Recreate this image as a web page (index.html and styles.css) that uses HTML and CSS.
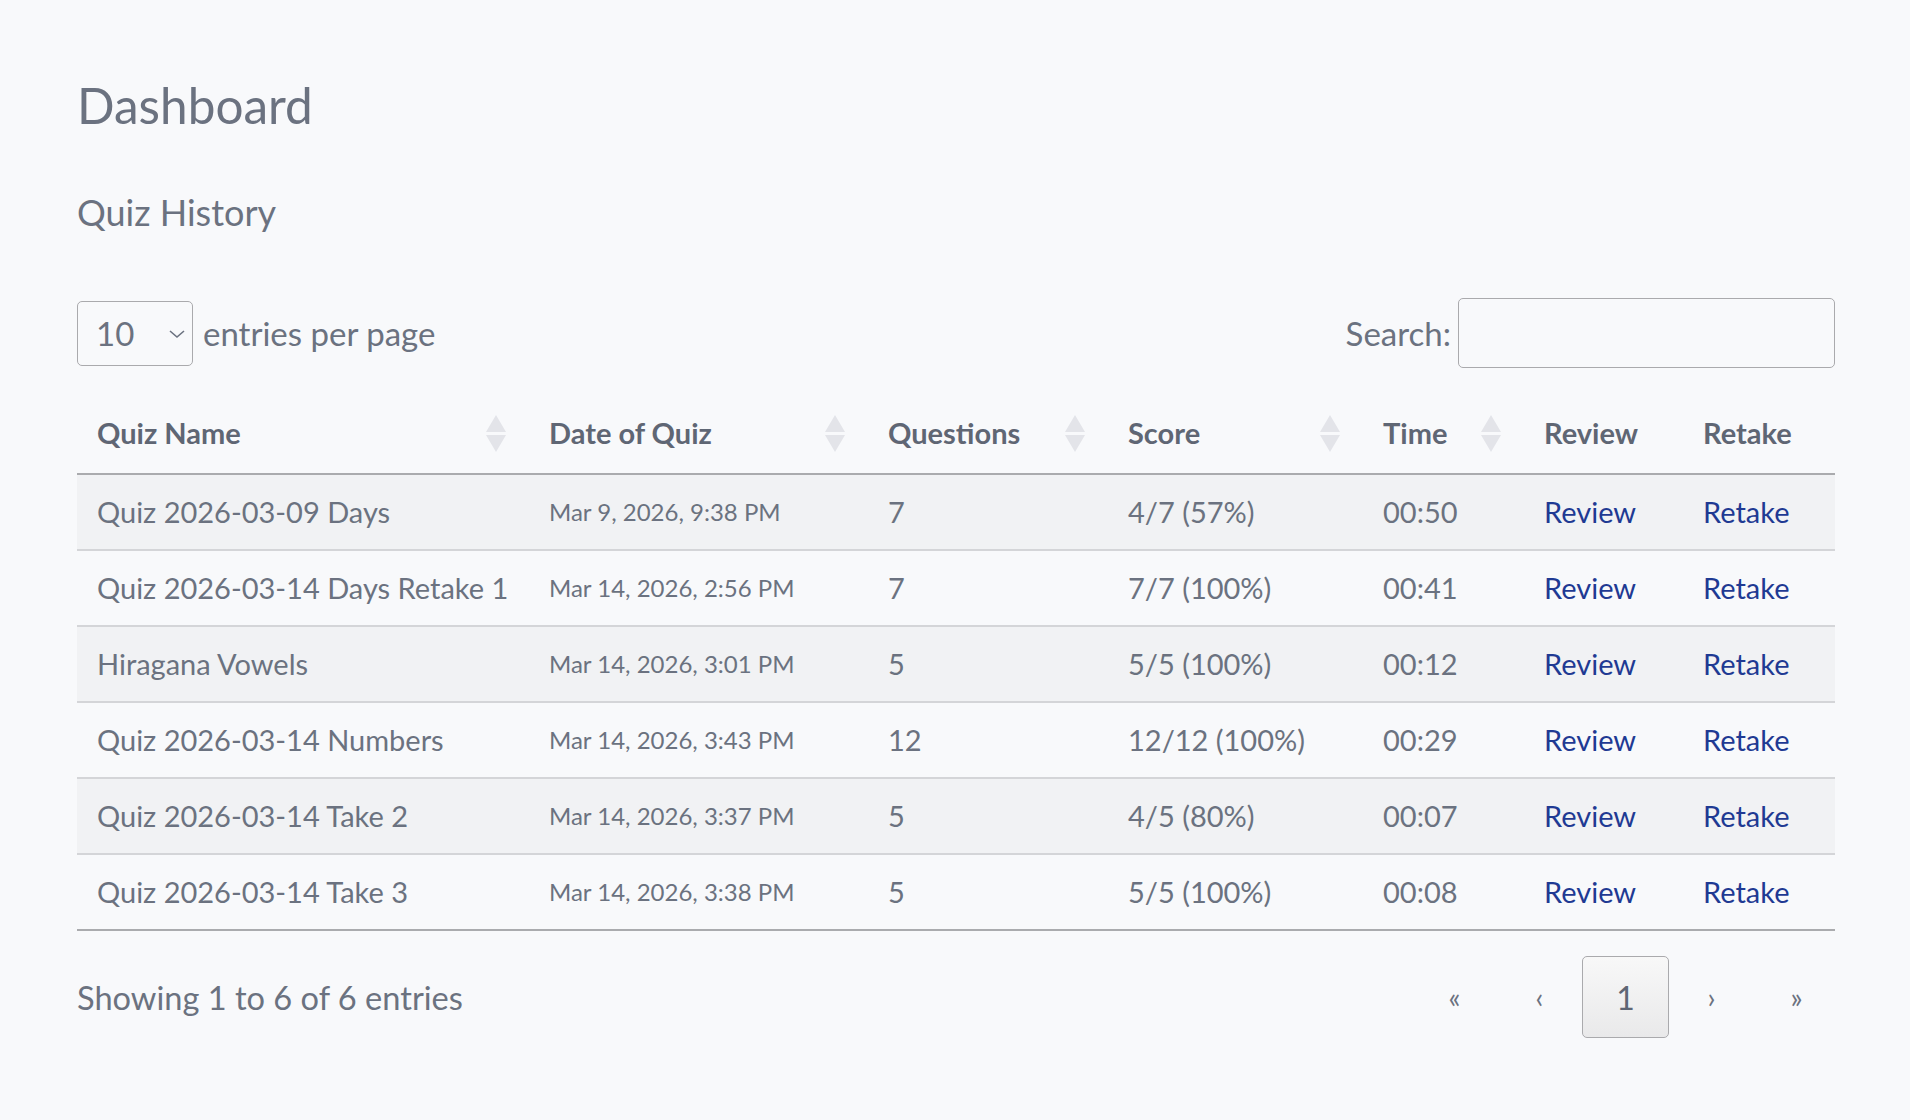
FILE: index.html
```html
<!DOCTYPE html>
<html lang="en">
<head>
  <meta charset="UTF-8" />
  <meta name="viewport" content="width=device-width, initial-scale=1.0"/>
  <title>Dashboard</title>
  <link rel="stylesheet" href="styles.css">
</head>
<body>
  <div class="container">
    <h1>Dashboard</h1>
    <h2>Quiz History</h2>

    <div class="dt-top">
      <div class="dt-length">
        <span class="select-wrap">
          <select id="pageLength">
            <option>10</option>
            <option>25</option>
            <option>50</option>
          </select>
          <svg class="chev" width="18" height="10" viewBox="0 0 18 10"><path d="M2 2 L9 8 L16 2" fill="none" stroke="#6b7280" stroke-width="1.6"/></svg>
        </span>
        <label for="pageLength">entries per page</label>
      </div>
      <div class="dt-search">
        <label for="searchInput">Search:</label>
        <input type="search" id="searchInput">
      </div>
    </div>

    <table class="dt">
      <colgroup>
        <col style="width: 452px">
        <col style="width: 339px">
        <col style="width: 240px">
        <col style="width: 255px">
        <col style="width: 161px">
        <col style="width: 159px">
        <col style="width: 152px">
      </colgroup>
      <thead>
        <tr>
          <th><span class="th-inner">Quiz Name<svg class="sort" width="20" height="37" viewBox="0 0 20 37"><path d="M10 0 L20 17 L0 17 Z M0 20 L20 20 L10 37 Z" fill="#e3e4e9"/></svg></span></th>
          <th><span class="th-inner">Date of Quiz<svg class="sort" width="20" height="37" viewBox="0 0 20 37"><path d="M10 0 L20 17 L0 17 Z M0 20 L20 20 L10 37 Z" fill="#e3e4e9"/></svg></span></th>
          <th><span class="th-inner">Questions<svg class="sort" width="20" height="37" viewBox="0 0 20 37"><path d="M10 0 L20 17 L0 17 Z M0 20 L20 20 L10 37 Z" fill="#e3e4e9"/></svg></span></th>
          <th><span class="th-inner">Score<svg class="sort" width="20" height="37" viewBox="0 0 20 37"><path d="M10 0 L20 17 L0 17 Z M0 20 L20 20 L10 37 Z" fill="#e3e4e9"/></svg></span></th>
          <th><span class="th-inner">Time<svg class="sort" width="20" height="37" viewBox="0 0 20 37"><path d="M10 0 L20 17 L0 17 Z M0 20 L20 20 L10 37 Z" fill="#e3e4e9"/></svg></span></th>
          <th>Review</th>
          <th>Retake</th>
        </tr>
      </thead>
      <tbody>
        <tr>
          <td>Quiz 2026-03-09 Days</td>
          <td class="date">Mar 9, 2026, 9:38 PM</td>
          <td>7</td>
          <td>4/7 (57%)</td>
          <td>00:50</td>
          <td><a href="#">Review</a></td>
          <td><a href="#">Retake</a></td>
        </tr>
        <tr>
          <td>Quiz 2026-03-14 Days Retake 1</td>
          <td class="date">Mar 14, 2026, 2:56 PM</td>
          <td>7</td>
          <td>7/7 (100%)</td>
          <td>00:41</td>
          <td><a href="#">Review</a></td>
          <td><a href="#">Retake</a></td>
        </tr>
        <tr>
          <td>Hiragana Vowels</td>
          <td class="date">Mar 14, 2026, 3:01 PM</td>
          <td>5</td>
          <td>5/5 (100%)</td>
          <td>00:12</td>
          <td><a href="#">Review</a></td>
          <td><a href="#">Retake</a></td>
        </tr>
        <tr>
          <td>Quiz 2026-03-14 Numbers</td>
          <td class="date">Mar 14, 2026, 3:43 PM</td>
          <td>12</td>
          <td>12/12 (100%)</td>
          <td>00:29</td>
          <td><a href="#">Review</a></td>
          <td><a href="#">Retake</a></td>
        </tr>
        <tr>
          <td>Quiz 2026-03-14 Take 2</td>
          <td class="date">Mar 14, 2026, 3:37 PM</td>
          <td>5</td>
          <td>4/5 (80%)</td>
          <td>00:07</td>
          <td><a href="#">Review</a></td>
          <td><a href="#">Retake</a></td>
        </tr>
        <tr>
          <td>Quiz 2026-03-14 Take 3</td>
          <td class="date">Mar 14, 2026, 3:38 PM</td>
          <td>5</td>
          <td>5/5 (100%)</td>
          <td>00:08</td>
          <td><a href="#">Review</a></td>
          <td><a href="#">Retake</a></td>
        </tr>
      </tbody>
    </table>

    <div class="dt-bottom">
      <div class="dt-info">Showing 1 to 6 of 6 entries</div>
      <div class="dt-paging">
        <button class="page-btn">«</button>
        <button class="page-btn">‹</button>
        <button class="page-btn current">1</button>
        <button class="page-btn">›</button>
        <button class="page-btn">»</button>
      </div>
    </div>
  </div>
</body>
</html>
```

FILE: styles.css
```css
body {
  font-family: Lato, "Open Sans", sans-serif;
  background-color: #f8f9fb;
  color: #6b7280;
  margin: 0;
  padding: 0;
  font-size: 33px;
}
.container {
  padding: 0 75px 0 77px;
}
h1 {
  font-size: 49.5px;
  font-weight: 400;
  line-height: 58px;
  margin: 76px 0 0;
}
h2 {
  font-size: 36px;
  font-weight: 400;
  line-height: 44px;
  margin: 56px 0 0;
}
.dt-top {
  display: flex;
  justify-content: space-between;
  align-items: center;
  margin-top: 64px;
  height: 70px;
}
.dt-length, .dt-search {
  display: flex;
  align-items: center;
}
.select-wrap {
  position: relative;
  display: inline-block;
}
.select-wrap select {
  appearance: none;
  -webkit-appearance: none;
  width: 116px;
  height: 65px;
  padding: 0 0 0 18px;
  border: 1px solid #aaaaad;
  border-radius: 5px;
  background-color: transparent;
  font-family: inherit;
  font-size: 33px;
  color: #6b7280;
}
.chev {
  position: absolute;
  right: 7px;
  top: 28px;
  pointer-events: none;
}
.dt-length label {
  margin-left: 10px;
}
.dt-search label {
  margin-right: 7px;
}
.dt-search input {
  width: 377px;
  height: 70px;
  box-sizing: border-box;
  border: 1px solid #aaaaad;
  border-radius: 5px;
  background-color: transparent;
  font-family: inherit;
  font-size: 28px;
  padding: 0 12px;
}
table.dt {
  width: 100%;
  table-layout: fixed;
  border-collapse: separate;
  border-spacing: 0;
  margin-top: 30px;
  font-size: 29px;
}
.dt th, .dt td {
  padding: 17px 20px;
  line-height: 40px;
  text-align: left;
  white-space: nowrap;
}
.dt th {
  padding: 15px 20px 20px;
  font-weight: 700;
  color: #5f6674;
  border-bottom: 2px solid #aaabae;
}
.th-inner {
  display: flex;
  justify-content: space-between;
  align-items: center;
}
.sort {
  margin-right: 3px;
  flex-shrink: 0;
}
.dt td {
  border-bottom: 2px solid #d4d5d8;
}
.dt tbody tr:nth-child(odd) td {
  background-color: #f1f2f4;
}
.dt tbody tr:last-child td {
  border-bottom-color: #aaabae;
}
.dt td.date {
  font-size: 24px;
}
.dt a {
  color: #1f3a93;
  text-decoration: none;
}
.dt-bottom {
  display: flex;
  justify-content: space-between;
  align-items: center;
  margin-top: 25px;
}
.dt-info {
  font-size: 32.6px;
}
.dt-paging {
  display: flex;
  margin-right: -4px;
}
.page-btn {
  width: 85px;
  height: 82px;
  border: 1px solid transparent;
  border-radius: 5px;
  background: transparent;
  font-family: inherit;
  font-size: 28px;
  color: #6b7280;
  cursor: pointer;
}
.page-btn.current {
  width: 87px;
  border-color: #aaaaad;
  background: linear-gradient(to bottom, #f8f8f8 0%, #e9e9ea 100%);
  font-size: 32px;
  color: #5f6674;
}
```
